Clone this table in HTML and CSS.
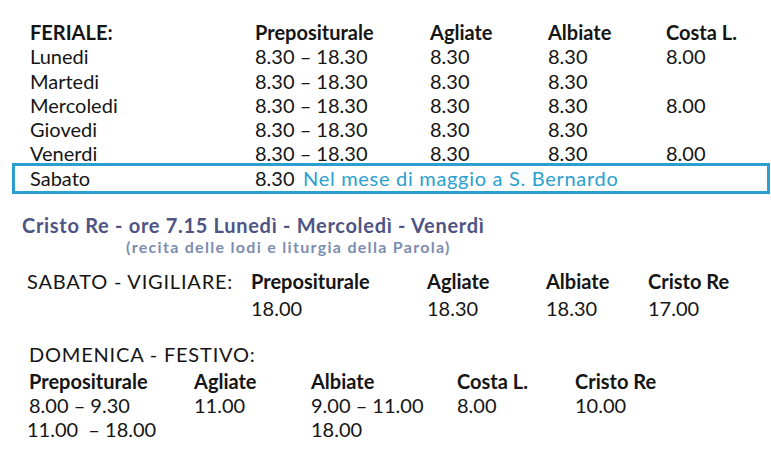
FILE: index.html
```html
<!DOCTYPE html>
<html lang="it">
<head>
<meta charset="utf-8">
<title>Orari Sante Messe</title>
<link rel="stylesheet" href="styles.css">
</head>
<body>
<div class="page">
  <section class="feriale">
    <div class="grid feriale-grid">
      <div class="b">FERIALE:</div><div class="b">Prepositurale</div><div class="b">Agliate</div><div class="b">Albiate</div><div class="b">Costa L.</div>
      <div>Lunedi</div><div>8.30 – 18.30</div><div>8.30</div><div>8.30</div><div>8.00</div>
      <div>Martedi</div><div>8.30 – 18.30</div><div>8.30</div><div>8.30</div><div></div>
      <div>Mercoledi</div><div>8.30 – 18.30</div><div>8.30</div><div>8.30</div><div>8.00</div>
      <div>Giovedi</div><div>8.30 – 18.30</div><div>8.30</div><div>8.30</div><div></div>
      <div>Venerdi</div><div>8.30 – 18.30</div><div>8.30</div><div>8.30</div><div>8.00</div>
    </div>
    <div class="sabato-box">
      <div class="sabato-day">Sabato</div><div class="sabato-time">8.30</div><div class="note">Nel mese di maggio a S. Bernardo</div>
    </div>
  </section>

  <section class="cristo">
    <div class="cristo-title">Cristo Re - ore 7.15 Lunedì - Mercoledì - Venerdì</div>
    <div class="cristo-sub">(recita delle lodi e liturgia della Parola)</div>
  </section>

  <section class="grid vigiliare-grid">
    <div class="caps">SABATO - VIGILIARE:</div><div class="b">Prepositurale</div><div class="b">Agliate</div><div class="b">Albiate</div><div class="b">Cristo Re</div>
    <div></div><div>18.00</div><div>18.30</div><div>18.30</div><div>17.00</div>
  </section>

  <section class="festivo">
    <div class="festivo-title caps">DOMENICA - FESTIVO:</div>
    <div class="grid festivo-grid">
      <div class="b">Prepositurale</div><div class="b">Agliate</div><div class="b">Albiate</div><div class="b">Costa L.</div><div class="b">Cristo Re</div>
      <div>8.00 – 9.30</div><div>11.00</div><div>9.00 – 11.00</div><div>8.00</div><div>10.00</div>
      <div class="shift">11.00&nbsp; – 18.00</div><div></div><div>18.00</div><div></div><div></div>
    </div>
  </section>
</div>
</body>
</html>
```

FILE: styles.css
```css
html, body {
  margin: 0;
  padding: 0;
  background: #ffffff;
}

body {
  font-family: "Lato", "Open Sans", sans-serif;
  font-size: 20px;
  color: #151515;
}

.page {
  width: 771px;
  height: 459px;
  overflow: hidden;
}

.grid {
  display: grid;
  line-height: 24px;
  white-space: nowrap;
}

.b {
  font-weight: 700;
}

.caps {
  letter-spacing: 0.8px;
}

.feriale {
  padding-top: 20px;
}

.feriale-grid {
  padding-left: 30px;
  grid-template-columns: 225px 175px 118px 118px 1fr;
  grid-auto-rows: 24.3px;
}

.sabato-box {
  margin-left: 12px;
  margin-top: -3px;
  width: 737px;
  height: 25px;
  border: 3px solid #2b9fcf;
  padding-left: 15px;
  display: flex;
  line-height: 25px;
  white-space: nowrap;
}

.sabato-day {
  width: 225px;
}

.sabato-time {
  width: 48px;
}

.note {
  color: #2a9fd0;
  letter-spacing: 0.7px;
}

.cristo {
  margin-top: 20px;
  font-weight: 700;
}

.cristo-title {
  padding-left: 22px;
  font-size: 20px;
  letter-spacing: 0.7px;
  line-height: 23px;
  color: #4e5485;
}

.cristo-sub {
  padding-left: 126px;
  margin-top: 1px;
  font-size: 16px;
  letter-spacing: 1.3px;
  line-height: 18px;
  color: #7d8db0;
}

.vigiliare-grid {
  margin-top: 13px;
  padding-left: 27px;
  grid-template-columns: 224px 176px 119px 102px 1fr;
  row-gap: 3px;
}

.festivo {
  margin-top: 22px;
  padding-left: 29px;
}

.festivo-title {
  line-height: 24px;
  margin-bottom: 3px;
}

.festivo-grid {
  grid-template-columns: 165px 117px 146px 118px 1fr;
  line-height: 24px;
}

.shift {
  margin-left: -2px;
}
```
